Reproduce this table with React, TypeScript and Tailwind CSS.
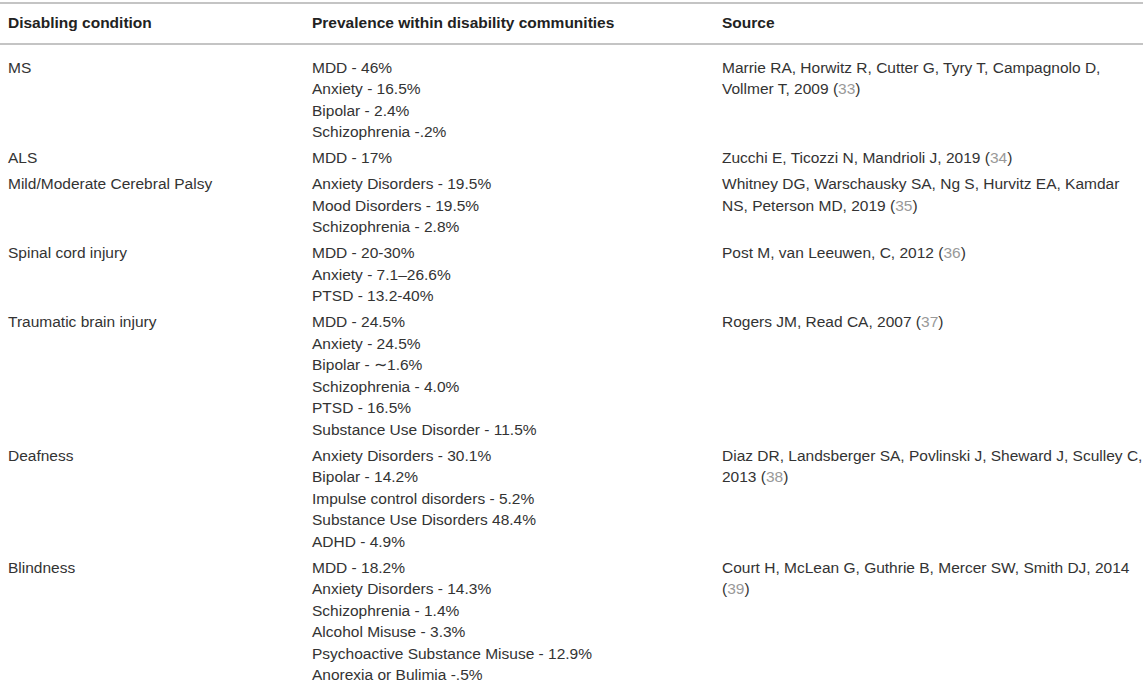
import React from 'react';

type Row = {
  condition: string;
  prevalence: string[];
  source: string[];
  ref: number;
};

const rows: Row[] = [
  {
    condition: 'MS',
    prevalence: ['MDD - 46%', 'Anxiety - 16.5%', 'Bipolar - 2.4%', 'Schizophrenia -.2%'],
    source: ['Marrie RA, Horwitz R, Cutter G, Tyry T, Campagnolo D,', 'Vollmer T, 2009'],
    ref: 33,
  },
  {
    condition: 'ALS',
    prevalence: ['MDD - 17%'],
    source: ['Zucchi E, Ticozzi N, Mandrioli J, 2019'],
    ref: 34,
  },
  {
    condition: 'Mild/Moderate Cerebral Palsy',
    prevalence: ['Anxiety Disorders - 19.5%', 'Mood Disorders - 19.5%', 'Schizophrenia - 2.8%'],
    source: ['Whitney DG, Warschausky SA, Ng S, Hurvitz EA, Kamdar', 'NS, Peterson MD, 2019'],
    ref: 35,
  },
  {
    condition: 'Spinal cord injury',
    prevalence: ['MDD - 20-30%', 'Anxiety - 7.1–26.6%', 'PTSD - 13.2-40%'],
    source: ['Post M, van Leeuwen, C, 2012'],
    ref: 36,
  },
  {
    condition: 'Traumatic brain injury',
    prevalence: [
      'MDD - 24.5%',
      'Anxiety - 24.5%',
      'Bipolar - ∼1.6%',
      'Schizophrenia - 4.0%',
      'PTSD - 16.5%',
      'Substance Use Disorder - 11.5%',
    ],
    source: ['Rogers JM, Read CA, 2007'],
    ref: 37,
  },
  {
    condition: 'Deafness',
    prevalence: [
      'Anxiety Disorders - 30.1%',
      'Bipolar - 14.2%',
      'Impulse control disorders - 5.2%',
      'Substance Use Disorders 48.4%',
      'ADHD - 4.9%',
    ],
    source: ['Diaz DR, Landsberger SA, Povlinski J, Sheward J, Sculley C,', '2013'],
    ref: 38,
  },
  {
    condition: 'Blindness',
    prevalence: [
      'MDD - 18.2%',
      'Anxiety Disorders - 14.3%',
      'Schizophrenia - 1.4%',
      'Alcohol Misuse - 3.3%',
      'Psychoactive Substance Misuse - 12.9%',
      'Anorexia or Bulimia -.5%',
    ],
    source: ['Court H, McLean G, Guthrie B, Mercer SW, Smith DJ, 2014', ''],
    ref: 39,
  },
];

export default function App() {
  return (
    <div className="w-[1143px] h-[680px] overflow-hidden bg-white pt-[2px] font-['Liberation_Sans',Arial,sans-serif] text-[15.5px] leading-[21.5px] text-[#333]">
      <table className="w-full table-fixed border-collapse">
        <colgroup>
          <col className="w-[304px]" />
          <col className="w-[410px]" />
          <col />
        </colgroup>
        <thead>
          <tr className="border-y-2 border-[#c4c4c4]">
            <th className="px-2 pt-[8px] pb-[9px] text-left font-bold text-[#222]">Disabling condition</th>
            <th className="px-2 pt-[8px] pb-[9px] text-left font-bold text-[#222]">Prevalence within disability communities</th>
            <th className="px-2 pt-[8px] pb-[9px] text-left font-bold text-[#222]">Source</th>
          </tr>
        </thead>
        <tbody>
          {rows.map((row, i) => (
            <tr key={row.condition} className="align-top">
              <td className={`px-2 pb-[4.5px] ${i === 0 ? 'pt-[12px]' : 'pt-0'}`}>{row.condition}</td>
              <td className={`px-2 pb-[4.5px] ${i === 0 ? 'pt-[12px]' : 'pt-0'}`}>
                {row.prevalence.map((p) => (
                  <div key={p} className="whitespace-nowrap">{p}</div>
                ))}
              </td>
              <td className={`px-2 pb-[4.5px] whitespace-nowrap ${i === 0 ? 'pt-[12px]' : 'pt-0'}`}>
                {row.source.map((line, j) => (
                  <div key={j}>
                    {line}
                    {j === row.source.length - 1 && (
                      <>
                        {line ? ' ' : ''}(<span className="text-[#999]">{row.ref}</span>)
                      </>
                    )}
                  </div>
                ))}
              </td>
            </tr>
          ))}
        </tbody>
      </table>
    </div>
  );
}
